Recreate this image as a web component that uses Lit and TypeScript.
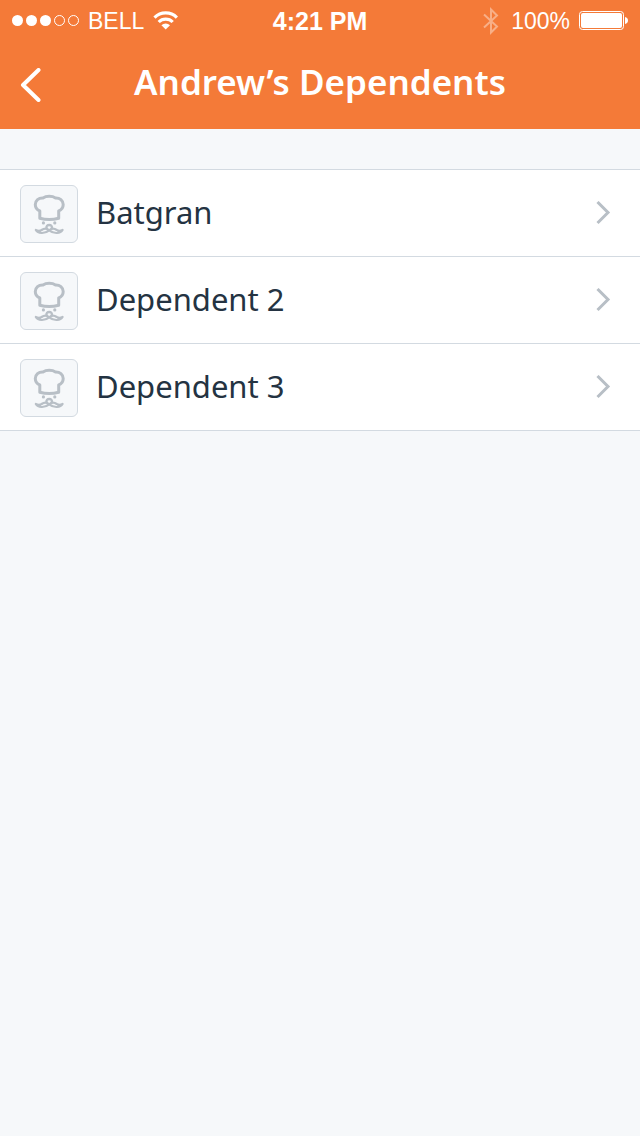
import { LitElement, html, css } from "lit";
import { customElement, state } from "lit/decorators.js";

@customElement("status-bar")
class StatusBar extends LitElement {
  static styles = css`
    :host {
      display: grid;
      grid-template-columns: 1fr auto 1fr;
      align-items: center;
      height: 42px;
      padding: 0 12px;
      font: 23px/42px "Liberation Sans", Arial, sans-serif;
      color: #fff;
    }
    .side {
      display: flex;
      align-items: center;
      gap: 9px;
    }
    .end {
      justify-content: flex-end;
    }
    .time {
      font-size: 25px;
      font-weight: 700;
    }
    svg {
      display: block;
      flex: none;
    }
  `;

  render() {
    return html`
      <div class="side">
        <svg width="67" height="12" viewBox="0 0 67 12" fill="#fff" aria-hidden="true">
          <circle cx="5.5" cy="5.5" r="5.5" />
          <circle cx="19.5" cy="5.5" r="5.5" />
          <circle cx="33.5" cy="5.5" r="5.5" />
          <circle cx="47.5" cy="5.5" r="5" fill="none" stroke="#fff" />
          <circle cx="61.5" cy="5.5" r="5" fill="none" stroke="#fff" />
        </svg>
        <span>BELL</span>
        <svg width="25" height="20" viewBox="0 0 25 20" fill="none" stroke="#fff" stroke-width="3.200" aria-hidden="true">
          <path d="M1.500 6.600a15.800 15.800 0 0 1 22.400 0" />
          <path d="M5.700 11a9.800 9.800 0 0 1 14 0" />
          <path d="M12.700 18.500 8.400 14.200a6.200 6.200 0 0 1 8.600 0z" fill="#fff" stroke="none" />
        </svg>
      </div>
      <span class="time">4:21 PM</span>
      <div class="side end">
        <svg width="20" height="28" viewBox="0 0 20 28" fill="none" stroke="#fff" stroke-opacity=".4" stroke-width="2" aria-hidden="true">
          <path d="M2 7.5 15 19.5 9 25.5V2.5L15 8.5 2 20.5" />
        </svg>
        <span>100%</span>
        <svg width="49" height="20" viewBox="0 0 49 20" aria-hidden="true">
          <rect x=".5" y=".5" width="44" height="18" rx="3" fill="none" stroke="#fff" />
          <rect x="2" y="2" width="41" height="15" rx="2" fill="#fff" />
          <path d="M46 6q3 .8 3 3.500t-3 3.500z" fill="#fff" />
        </svg>
      </div>
    `;
  }
}

@customElement("dependent-row")
class DependentRow extends LitElement {
  static properties = { name: { type: String } };
  declare name: string;

  static styles = css`
    :host {
      display: block;
    }
    .row {
      display: flex;
      align-items: center;
      gap: 18px;
      padding: 15px 29px 13px 20px;
      border-bottom: 1px solid #d3dae1;
      background: #fff;
      color: #243342;
      text-decoration: none;
    }
    .thumb {
      flex: none;
      width: 56px;
      height: 56px;
      border: 1px solid #d3dae1;
      border-radius: 6px;
      background: #f6f8fa;
    }
    .name {
      flex: 1;
      min-width: 0;
      padding-bottom: 4px;
      font-size: 31px;
      line-height: 40px;
    }
    svg {
      display: block;
      flex: none;
    }
  `;

  render() {
    return html`
      <a class="row" href="#">
        <span class="thumb">
          <svg width="56" height="56" viewBox="1 1 56 56" fill="none" stroke="#b8bfc6" stroke-width="3" stroke-linejoin="round" stroke-linecap="round" aria-hidden="true">
            <path d="M19.800 33.200V26C17 25 15.300 22.800 15.300 19.600C15.300 15.300 18.700 12.700 23 12.900C24.500 11.900 26.500 11.300 29.200 11.300C32 11.300 34 11.900 35.500 12.900C39.700 12.700 43.200 15.300 43.200 19.600C43.200 22.800 41.500 25 38.700 26V33.200Q29.200 36 19.800 33.200Z" />
            <circle cx="23.400" cy="37.900" r="1.600" fill="#b8bfc6" stroke="none" />
            <circle cx="34.800" cy="37.900" r="1.600" fill="#b8bfc6" stroke="none" />
            <path d="M26.600 43.300C25.300 38.800 33.100 38.800 31.800 43.300" stroke-width="2.400" />
            <path d="M29.200 45.300C27 43.200 24 43.200 21.600 45C19.500 46.200 17.500 45.800 15.800 44.900C18 48.500 24 49.400 29.200 45.300C34.400 49.400 40.400 48.500 42.600 44.900C40.900 45.800 38.900 46.200 36.800 45C34.400 43.200 31.400 43.200 29.200 45.300Z" stroke-width="2.200" />
          </svg>
        </span>
        <span class="name">${this.name}</span>
        <svg width="15" height="26" viewBox="0 0 15 26" fill="none" stroke="#b8bfc6" stroke-width="3" aria-hidden="true">
          <path d="M1.500 1 12 11.500 1.500 22" />
        </svg>
      </a>
    `;
  }
}

@customElement("app-root")
class AppRoot extends LitElement {
  @state() private dependents = ["Batgran", "Dependent 2", "Dependent 3"];

  static styles = css`
    :host {
      display: block;
      min-height: 100vh;
      background: #f6f8fa;
      font-family: "Noto Sans", sans-serif;
    }
    .top {
      background: #f47a38;
      color: #fff;
    }
    .nav {
      display: grid;
      grid-template-columns: 60px 1fr 60px;
      align-items: center;
      height: 87px;
    }
    .back {
      display: flex;
      padding: 0 0 2px 20px;
      border: 0;
      background: none;
      color: inherit;
    }
    .title {
      margin: 0;
      padding-bottom: 8px;
      font-size: 35px;
      font-weight: 600;
      line-height: 40px;
      text-align: center;
      white-space: nowrap;
    }
    .list {
      margin: 40px 0 0;
      padding: 0;
      border-top: 1px solid #d3dae1;
      list-style: none;
    }
  `;

  render() {
    return html`
      <header class="top">
        <status-bar></status-bar>
        <nav class="nav">
          <button class="back" type="button" aria-label="Back">
            <svg width="22" height="34" viewBox="0 0 22 34" fill="none" stroke="#fff" stroke-width="4" stroke-linecap="round" stroke-linejoin="round" aria-hidden="true">
              <path d="M18.500 2 3 17 18.500 32" />
            </svg>
          </button>
          <h1 class="title">Andrew’s Dependents</h1>
        </nav>
      </header>
      <main>
        <ul class="list">
          ${this.dependents.map((name) => html`<li><dependent-row .name=${name}></dependent-row></li>`)}
        </ul>
      </main>
    `;
  }
}
